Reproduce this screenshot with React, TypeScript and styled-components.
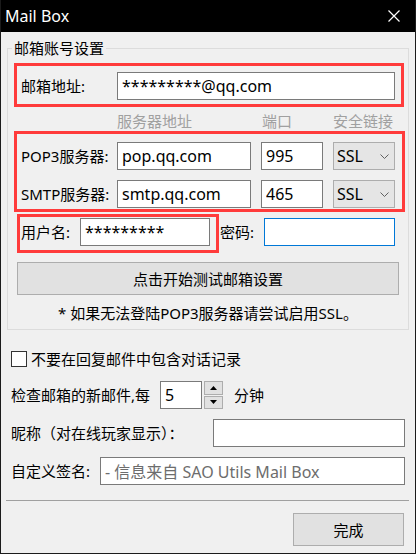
import React from "react";
import styled, { createGlobalStyle } from "styled-components";

const GlobalStyle = createGlobalStyle`
  html, body { margin: 0; padding: 0; background: #f0f0f0; }
  body {
    font-family: "Noto Sans", "Noto Sans CJK SC", sans-serif;
    font-size: 15px;
    color: #000;
  }
  * { box-sizing: border-box; }
`;

const Window = styled.div`
  width: 416px;
  height: 554px;
  border: 1px solid #1b1b1b;
  border-top: 0;
  background: #f0f0f0;
  display: flex;
  flex-direction: column;
  overflow: hidden;
`;

const TitleBar = styled.div`
  height: 32px;
  flex: none;
  background: #000;
  color: #fff;
  display: flex;
  align-items: center;
  justify-content: space-between;
  padding: 0 15px 0 4px;
  font-size: 16px;
`;

const Body = styled.div`
  display: flex;
  flex-direction: column;
  padding: 6px 6px 0;
`;

const Group = styled.fieldset`
  margin: 0;
  padding: 0;
  min-width: 0;
  border: 1px solid #dcdcdc;
`;

const Legend = styled.legend`
  margin-left: 4px;
  padding: 0 2px;
  font-size: 15px;
  line-height: 20px;
`;

const RedBox = styled.div<{ $m: string; $p: string }>`
  border: 3px solid #ff3b3b;
  margin: ${(p) => p.$m};
  padding: ${(p) => p.$p};
`;

const Row = styled.div<{ $gap?: number }>`
  display: flex;
  align-items: center;
  gap: ${(p) => p.$gap ?? 0}px;
`;

const Column = styled.div<{ $gap?: number }>`
  display: flex;
  flex-direction: column;
  gap: ${(p) => p.$gap ?? 0}px;
`;

const Label = styled.span<{ $w?: number; $ml?: number }>`
  flex: none;
  width: ${(p) => (p.$w ? `${p.$w}px` : "auto")};
  margin-left: ${(p) => p.$ml ?? 0}px;
  white-space: nowrap;
  font-size: 15px;
  line-height: 20px;
`;

const TextInput = styled.input<{ $w?: number; $active?: boolean; $muted?: boolean }>`
  flex: ${(p) => (p.$w ? "none" : "1")};
  width: ${(p) => (p.$w ? `${p.$w}px` : "auto")};
  min-width: 0;
  height: 28px;
  margin: 0;
  padding: 0 4px;
  border: 1px solid ${(p) => (p.$active ? "#0078d7" : "#7a7a7a")};
  background: #fff;
  color: ${(p) => (p.$muted ? "#6d6d6d" : "#000")};
  font-family: "Noto Sans", "Noto Sans CJK SC", sans-serif;
  font-size: 16px;
  outline: none;
`;

const HeaderRow = styled.div`
  display: flex;
  align-items: center;
  height: 24px;
  padding: 3px 0 0 109px;
  color: #a0a0a0;
  font-size: 15px;
`;

const HeaderCell = styled.span<{ $w?: number }>`
  flex: none;
  width: ${(p) => (p.$w ? `${p.$w}px` : "auto")};
  white-space: nowrap;
`;

const SelectBox = styled.div`
  flex: none;
  width: 62px;
  height: 28px;
  display: flex;
  align-items: center;
  justify-content: space-between;
  padding: 0 5px 0 3px;
  background: #e5e5e5;
  border: 1px solid #adadad;
  font-size: 16px;
`;

const CredRow = styled.div`
  display: flex;
  align-items: flex-start;
  margin: 2px 0 0 9px;
`;

const PassLabel = styled.span`
  flex: none;
  width: 44px;
  margin: 4px 0 0 1px;
  height: 28px;
  line-height: 28px;
  font-size: 15px;
  white-space: nowrap;
`;

const PassInput = styled(TextInput)`
  margin-top: 4px;
`;

const PushButton = styled.button<{ $w: number }>`
  flex: none;
  width: ${(p) => p.$w}px;
  height: 33px;
  margin: 0;
  padding: 0;
  background: #e1e1e1;
  border: 1px solid #adadad;
  font-family: "Noto Sans", "Noto Sans CJK SC", sans-serif;
  font-size: 15px;
  color: #000;
`;

const TestButton = styled(PushButton)`
  margin: 9px 0 0 9px;
`;

const Note = styled.div`
  margin: 8px 0 6px;
  padding-left: 50px;
  line-height: 20px;
  font-size: 15px;
  white-space: nowrap;
`;

const OptionRow = styled.div<{ $mt: number; $gap?: number }>`
  display: flex;
  align-items: center;
  margin: ${(p) => p.$mt}px 0 0 4px;
  gap: ${(p) => p.$gap ?? 0}px;
  min-height: 16px;
`;

const CheckBox = styled.span`
  flex: none;
  width: 16px;
  height: 16px;
  border: 1px solid #333;
  background: #fff;
`;

const Spinner = styled.div`
  flex: none;
  width: 19px;
  height: 28px;
  margin: 0 11px 0 2px;
  display: flex;
  flex-direction: column;
  gap: 1px;
`;

const SpinButton = styled.div`
  flex: 1;
  display: flex;
  align-items: center;
  justify-content: center;
  background: #e1e1e1;
  border: 1px solid #adadad;
`;

const Separator = styled.div`
  height: 1px;
  margin: 15px 0 0 -1px;
  background: #a0a0a0;
`;

const Footer = styled.div`
  display: flex;
  justify-content: flex-end;
  margin: 12px 5px 0 0;
`;

const CloseIcon = () => (
  <svg width="12" height="12" viewBox="0 0 12 12">
    <path d="M0.5 0.5 L11.5 11.5 M11.5 0.5 L0.5 11.5" stroke="#fff" strokeWidth="1.2" fill="none" />
  </svg>
);

const Chevron = () => (
  <svg width="9" height="5" viewBox="0 0 9 5">
    <polyline points="0.5,0.5 4.5,4.5 8.5,0.5" stroke="#606060" strokeWidth="1" fill="none" />
  </svg>
);

const Arrow = ({ up }: { up?: boolean }) => (
  <svg width="7" height="4" viewBox="0 0 7 4">
    <polygon points={up ? "0,4 3.5,0 7,4" : "0,0 3.5,4 7,0"} fill="#000" />
  </svg>
);

export default function App() {
  return (
    <>
      <GlobalStyle />
      <Window>
        <TitleBar>
          <span>Mail Box</span>
          <CloseIcon />
        </TitleBar>
        <Body>
          <Group>
            <Legend>邮箱账号设置</Legend>
            <RedBox $m="5px 4px 0 6px" $p="6px 6px 4px 4px">
              <Row>
                <Label $w={96}>邮箱地址:</Label>
                <TextInput defaultValue="*********@qq.com" />
              </Row>
            </RedBox>
            <HeaderRow>
              <HeaderCell $w={145}>服务器地址</HeaderCell>
              <HeaderCell $w={71}>端口</HeaderCell>
              <HeaderCell>安全链接</HeaderCell>
            </HeaderRow>
            <RedBox $m="0 3px 0 6px" $p="8px 0 1px 4px">
              <Column $gap={10}>
                <Row $gap={10}>
                  <Label $w={86}>POP3服务器:</Label>
                  <TextInput $w={134} defaultValue="pop.qq.com" />
                  <TextInput $w={62} defaultValue="995" />
                  <SelectBox>
                    <span>SSL</span>
                    <Chevron />
                  </SelectBox>
                </Row>
                <Row $gap={10}>
                  <Label $w={86}>SMTP服务器:</Label>
                  <TextInput $w={134} defaultValue="smtp.qq.com" />
                  <TextInput $w={62} defaultValue="465" />
                  <SelectBox>
                    <span>SSL</span>
                    <Chevron />
                  </SelectBox>
                </Row>
              </Column>
            </RedBox>
            <CredRow>
              <RedBox $m="0" $p="1px 6px 4px 1px">
                <Row>
                  <Label $w={59}>用户名:</Label>
                  <TextInput $w={130} defaultValue="*********" />
                </Row>
              </RedBox>
              <PassLabel>密码:</PassLabel>
              <PassInput $w={131} $active type="text" defaultValue="" />
            </CredRow>
            <TestButton $w={382}>点击开始测试邮箱设置</TestButton>
            <Note>* 如果无法登陆POP3服务器请尝试启用SSL。</Note>
          </Group>

          <OptionRow $mt={19} $gap={4}>
            <CheckBox />
            <Label>不要在回复邮件中包含对话记录</Label>
          </OptionRow>
          <OptionRow $mt={12}>
            <Label $w={149}>检查邮箱的新邮件,每</Label>
            <TextInput $w={42} defaultValue="5" />
            <Spinner>
              <SpinButton>
                <Arrow up />
              </SpinButton>
              <SpinButton>
                <Arrow />
              </SpinButton>
            </Spinner>
            <Label>分钟</Label>
          </OptionRow>
          <OptionRow $mt={10}>
            <Label $w={202}>昵称（对在线玩家显示）：</Label>
            <TextInput $w={192} defaultValue="" />
          </OptionRow>
          <OptionRow $mt={10}>
            <Label $w={89}>自定义签名:</Label>
            <TextInput $w={305} $muted defaultValue="- 信息来自 SAO Utils Mail Box" />
          </OptionRow>
          <Separator />
          <Footer>
            <PushButton $w={111}>完成</PushButton>
          </Footer>
        </Body>
      </Window>
    </>
  );
}
